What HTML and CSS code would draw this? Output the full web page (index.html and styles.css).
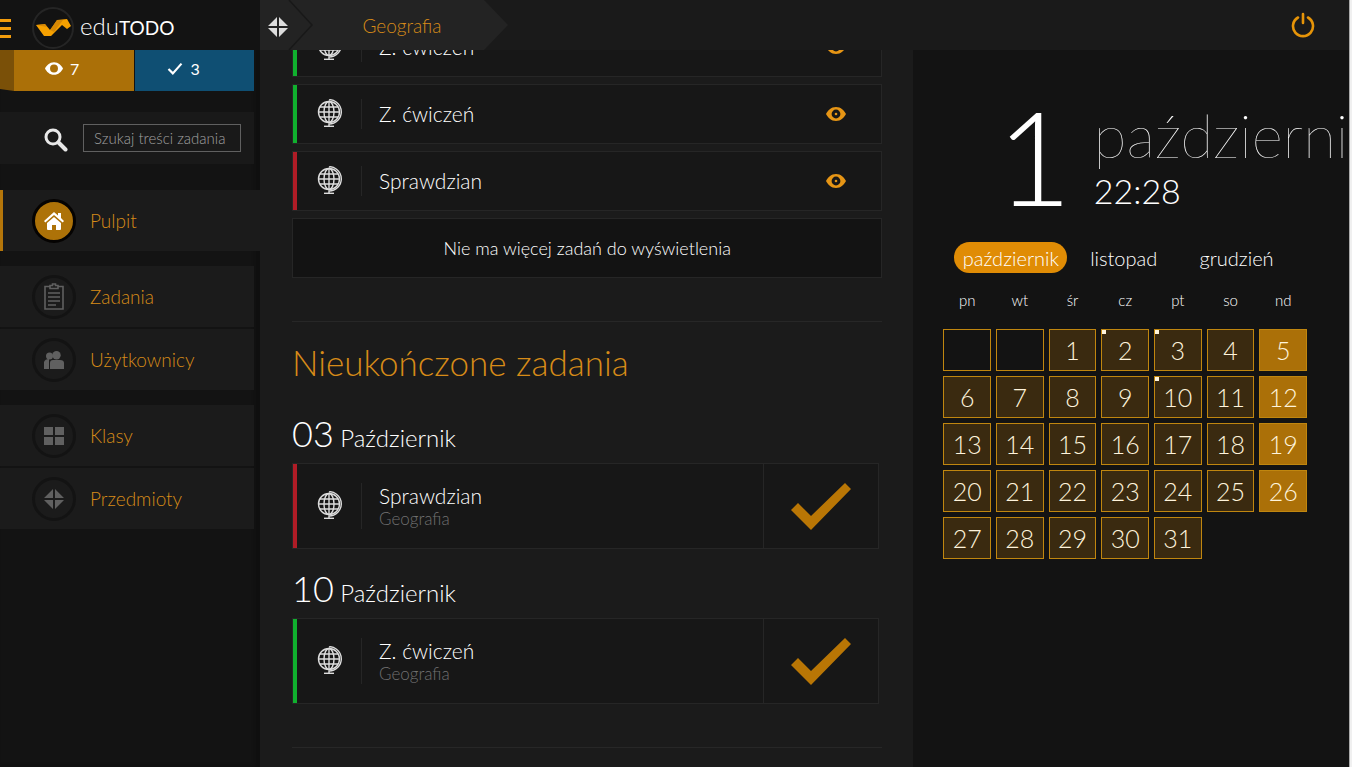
FILE: index.html
```html
<!DOCTYPE html>
<html lang="pl">
<head>
<meta charset="utf-8">
<title>eduTODO</title>
<link rel="stylesheet" href="styles.css">
</head>
<body>
<svg class="defs" aria-hidden="true">
  <symbol id="eye" viewBox="0 0 20 14"><path fill="currentColor" fill-rule="evenodd" d="M10 0C5 0 1.800 3.500 0 7c1.800 3.500 5 7 10 7s8.200-3.500 10-7C18.200 3.500 15 0 10 0zm0 2.600a4.400 4.400 0 1 1 0 8.800 4.400 4.400 0 0 1 0-8.800z"/><circle class="pupil" cx="10" cy="7" r="1.300"/></symbol>
  <symbol id="eye-open" viewBox="0 0 20 14"><path fill="currentColor" fill-rule="evenodd" d="M10 0C5 0 1.800 3.500 0 7c1.800 3.500 5 7 10 7s8.200-3.500 10-7C18.200 3.500 15 0 10 0zm0 2.600a4.400 4.400 0 1 1 0 8.800 4.400 4.400 0 0 1 0-8.800z"/></symbol>
  <symbol id="globe" viewBox="0 0 26 28"><g fill="none" stroke="currentColor" stroke-width="1.400"><circle cx="12" cy="13" r="10.500"/><ellipse cx="12" cy="13" rx="5" ry="10.500"/><path d="M12 2.500v21M1.500 13h21M3 8h18M3 18h18"/><path d="M12 1c4-1 12 3 12.300 11.500C24.500 19 19 25 12 25v2"/><path d="M7 27.300h10"/></g></symbol>
  <symbol id="arrows" viewBox="0 0 20 20"><path fill="currentColor" d="M9 0v9H0zM11 0v9h9zM9 20v-9H0zM11 20v-9h9z"/></symbol>
  <symbol id="tick" viewBox="0 0 60 47"><path fill="currentColor" d="M0 27l7-7 13 13L54 0l6 6-40 41z"/></symbol>
</svg>

<header class="topbar">
  <div class="brand">
    <button class="burger" aria-label="Menu"><span></span><span></span><span></span></button>
    <a class="logo" href="#">
      <svg class="logo-mark" viewBox="0 0 42 42"><circle cx="21" cy="21" r="20" fill="#121212" stroke="#252525" stroke-width="2"/><path fill="#f5a000" d="M4 18l9-1 5 6 7-10 10-1 4 7-4 3-5-4-11 11h-7z"/><path fill="#c97d06" d="M25 13l6 0-9 12-4-2zM4 18l9-1 2 3z" opacity=".7"/></svg>
      <span class="logo-text">edu<span class="logo-strong">TODO</span></span>
    </a>
  </div>
  <nav class="crumbs">
    <svg class="crumb-shape" viewBox="0 0 248 50" preserveAspectRatio="none"><path fill="#232323" d="M0 0h224l24 25-24 25H0z"/><path d="M29 0l23 25-23 25" fill="none" stroke="#181818" stroke-width="1.500"/></svg>
    <a class="crumb-home" href="#" aria-label="Przedmioty"><svg><use href="#arrows"/></svg></a>
    <a class="crumb-page" href="#">Geografia</a>
  </nav>
  <button class="power" aria-label="Wyloguj"><svg viewBox="0 0 24 26" fill="none" stroke="#e69408" stroke-width="2.600" stroke-linecap="round"><path d="M7 5.500a10 10 0 1 0 10 0M12 2v9"/></svg></button>
</header>

<div class="layout">
  <aside class="sidebar">
    <div class="stats">
      <span class="stat-fold"></span>
      <a class="stat stat-seen" href="#"><svg><use href="#eye-open"/></svg>7</a>
      <a class="stat stat-done" href="#"><svg viewBox="0 0 14 12"><path d="M1 6.500l4 4L13 1.500" fill="none" stroke="#fff" stroke-width="2"/></svg>3</a>
    </div>
    <form class="search">
      <label for="q" aria-label="Szukaj"><svg viewBox="0 0 24 24" fill="none" stroke="#e8e8e8"><circle cx="9" cy="9" r="7" stroke-width="3"/><path d="M14.500 14.500l7 7" stroke-width="4" stroke-linecap="round"/></svg></label>
      <input id="q" type="text" placeholder="Szukaj treści zadania">
    </form>
    <nav class="menu">
      <a class="item active" href="#"><span class="badge"><svg viewBox="0 0 20 18" fill="#fff"><path d="M10 0l4 3.500V1h3v5l3 3-1.300 1.400L10 3 1.300 10.400 0 9z"/><path d="M3 11l7-6 7 6v6a1 1 0 0 1-1 1h-4v-5H8v5H4a1 1 0 0 1-1-1z"/></svg></span>Pulpit</a>
      <div class="group">
        <a class="item" href="#"><span class="badge"><svg class="tall" viewBox="0 0 20 27" fill="none" stroke="currentColor" stroke-width="1.600"><path d="M6 3.500H1V26h18V3.500h-5M6 5.500v-3h2.500V1h3v1.500H14v3zM4 10h12M4 14h12M4 18h12M4 22h8"/></svg></span>Zadania</a>
        <a class="item" href="#"><span class="badge"><svg viewBox="0 0 20 18" fill="currentColor"><circle cx="5.500" cy="5" r="3.500"/><path d="M0 11q1-3 5-3v10H0z"/><circle cx="12.500" cy="4.200" r="4.200"/><path d="M6 18v-6q0-3 3-3h7q4 0 4 3v6z"/></svg></span>Użytkownicy</a>
      </div>
      <div class="group">
        <a class="item" href="#"><span class="badge"><svg viewBox="0 0 20 20" fill="currentColor"><path d="M0 1h9v8H0zM11 1h9v8h-9zM0 11h9v8H0zM11 11h9v8h-9z"/></svg></span>Klasy</a>
        <a class="item" href="#"><span class="badge"><svg><use href="#arrows"/></svg></span>Przedmioty</a>
      </div>
    </nav>
  </aside>

  <main class="content">
    <section class="tasks">
      <article class="task green"><svg class="globe"><use href="#globe"/></svg><span class="name">Z. ćwiczeń</span><button class="view" aria-label="Pokaż"><svg><use href="#eye"/></svg></button></article>
      <article class="task green"><svg class="globe"><use href="#globe"/></svg><span class="name">Z. ćwiczeń</span><button class="view" aria-label="Pokaż"><svg><use href="#eye"/></svg></button></article>
      <article class="task red"><svg class="globe"><use href="#globe"/></svg><span class="name">Sprawdzian</span><button class="view" aria-label="Pokaż"><svg><use href="#eye"/></svg></button></article>
      <p class="no-more">Nie ma więcej zadań do wyświetlenia</p>
    </section>
    <section class="unfinished">
      <h2>Nieukończone zadania</h2>
      <h3><span class="day">03</span> Październik</h3>
      <article class="card red"><svg class="globe"><use href="#globe"/></svg><div class="name">Sprawdzian<small>Geografia</small></div><button class="finish" aria-label="Ukończ"><svg><use href="#tick"/></svg></button></article>
      <h3><span class="day">10</span> Październik</h3>
      <article class="card green"><svg class="globe"><use href="#globe"/></svg><div class="name">Z. ćwiczeń<small>Geografia</small></div><button class="finish" aria-label="Ukończ"><svg><use href="#tick"/></svg></button></article>
    </section>
    <hr>
  </main>

  <aside class="calendar">
    <div class="today">
      <span class="today-day">1</span>
      <div class="today-info"><span class="today-month">październik</span><time>22:28</time></div>
    </div>
    <div class="months">
      <button class="month selected">październik</button>
      <button class="month">listopad</button>
      <button class="month">grudzień</button>
    </div>
    <table class="days">
      <thead><tr><th>pn</th><th>wt</th><th>śr</th><th>cz</th><th>pt</th><th>so</th><th>nd</th></tr></thead>
      <tbody>
        <tr><td class="blank"></td><td class="blank"></td><td>1</td><td class="marked">2</td><td class="marked">3</td><td>4</td><td class="sunday">5</td></tr>
        <tr><td>6</td><td>7</td><td>8</td><td>9</td><td class="marked">10</td><td>11</td><td class="sunday">12</td></tr>
        <tr><td>13</td><td>14</td><td>15</td><td>16</td><td>17</td><td>18</td><td class="sunday">19</td></tr>
        <tr><td>20</td><td>21</td><td>22</td><td>23</td><td>24</td><td>25</td><td class="sunday">26</td></tr>
        <tr><td>27</td><td>28</td><td>29</td><td>30</td><td>31</td></tr>
      </tbody>
    </table>
  </aside>
  <div class="scroll-edge"></div>
</div>
</body>
</html>
```
FILE: styles.css
```css
* { box-sizing: border-box; }
html, body { height: 100%; }
body {
  margin: 0;
  overflow: hidden;
  background: #131313;
  color: #fff;
  font-family: Lato, "Noto Sans", sans-serif;
  font-weight: 300;
}
a { color: inherit; text-decoration: none; }
button { padding: 0; border: 0; background: none; color: inherit; font: inherit; cursor: pointer; }
svg { display: block; }
.defs { display: none; }
.pupil { fill: currentColor; }

/* Top bar */
.topbar {
  position: fixed;
  inset: 0 3px auto 0;
  z-index: 2;
  display: flex;
  height: 50px;
  background: #1a1a1a;
}
.brand { display: flex; align-items: center; width: 260px; padding-top: 6px; background: #131313; }
.burger { display: flex; flex-direction: column; gap: 5px; width: 11px; margin-right: 21px; }
.burger span { height: 3px; background: #f39c0c; }
.logo { display: flex; align-items: center; gap: 6px; }
.logo-mark { width: 42px; height: 42px; }
.logo-text { padding-bottom: 3px; font-size: 24px; line-height: 30px; }
.logo-strong { font-size: 19px; font-weight: 400; }
.crumbs { position: relative; display: flex; align-items: center; width: 248px; }
.crumb-shape { position: absolute; inset: 0; width: 100%; height: 100%; }
.crumb-home { position: relative; width: 20px; margin: 4px 0 0 8px; color: #ddd; }
.crumb-home svg { width: 20px; height: 20px; }
.crumb-page { position: relative; flex: 1; padding-left: 8px; color: #d78b18; font-size: 19px; text-align: center; }
.power { margin: 0 34px 0 auto; }
.power svg { width: 24px; height: 26px; }

.layout { display: grid; grid-template-columns: 260px 3fr 2fr 3px; height: 100%; }
.scroll-edge { background: #f0f0f0; border-left: 1px solid #aaa; }

/* Sidebar */
.sidebar { padding-top: 50px; background: #131313; box-shadow: inset -4px 0 4px #0f0f0f; }
.stats { display: flex; height: 41px; margin-right: 6px; }
.stat-fold { width: 14px; background: #7a5008; clip-path: polygon(0 0, 100% 0, 100% 100%, 0 95%); }
.stat { display: flex; flex: 1; align-items: center; padding: 0 0 5px 31px; background: #ab7008; font-size: 16px; font-weight: 400; gap: 7px; }
.stat svg { width: 18px; height: 13px; }
.stat-done { border-left: 1px solid #131313; background: #0f4f73; }
.search { display: flex; align-items: center; gap: 15px; height: 52px; margin: 21px 6px 26px 0; padding-left: 44px; background: #191919; }
.search svg { width: 24px; height: 24px; margin-top: 4px; }
.search input {
  width: 158px; height: 28px; padding: 0 10px; border: 1px solid #606060; background: transparent; color: #ddd;
  font: 300 15px Lato, sans-serif;
}
.search input::placeholder { color: #a0a0a0; }
.item {
  display: flex; align-items: center; gap: 14px; height: 61px; margin-right: 6px; padding-left: 32px;
  background: #1b1b1b; color: #d78b18; font-size: 19px;
}
.item.active { margin-right: 0; padding-left: 29px; border-left: 3px solid #b5760a; }
.group { display: grid; gap: 2px; margin-top: 15px; }
.badge { display: grid; place-items: center; width: 44px; height: 44px; border: 3px solid #131313; border-radius: 50%; color: #606060; }
.active .badge { border-color: #050302; background: #ad7208; }
.badge svg { width: 20px; height: 20px; }
.badge .tall { height: 27px; }

/* Task lists */
.content { padding: 17px 31px 0 32px; background: #1b1b1b; }
.tasks { display: grid; gap: 7px; }
.task, .card { display: flex; align-items: center; border: 1px solid #262626; background: #171717; font-size: 21px; }
.task { height: 60px; padding-right: 35px; }
.green { box-shadow: inset 4px 0 #10b02e; }
.red { box-shadow: inset 4px 0 #b01c26; }
.globe { width: 26px; height: 28px; margin: 0 18px 0 24px; color: #ddd; }
.name { display: flex; flex: 1; flex-direction: column; justify-content: center; min-height: 30px; padding-left: 17px; border-left: 1px solid #262626; line-height: 26px; }
.task .globe { margin-bottom: 3px; }
.name small { color: #707070; font-size: 17px; line-height: 19px; }
.view { color: #e69515; }
.view svg { width: 20px; height: 14px; }
.no-more { display: grid; place-items: center; height: 60px; margin: 0; border: 1px solid #262626; background: #131313; font-size: 18px; }
.unfinished { margin-top: 43px; padding-top: 16px; border-top: 1px solid #272727; }
h2 { margin: 0 0 27px; color: #d78b18; font-size: 35px; font-weight: 300; line-height: 48px; }
h3 { margin: 0 0 5px; font-size: 24px; font-weight: 300; line-height: 40px; }
.day { font-size: 36px; }
.card { height: 86px; margin: 0 3px 19px 0; }
.card .name { padding-bottom: 1px; }
.card .globe { margin-bottom: 2px; }
.finish { display: grid; place-items: center; align-self: stretch; width: 115px; border-left: 1px solid #262626; color: #b97605; }
.finish svg { width: 60px; height: 47px; }
hr { height: 1px; margin: 43px 0 0; border: 0; background: #272727; }

/* Calendar */
.calendar { min-width: 0; padding: 101px 37px 0 25px; overflow: hidden; background: #131313; }
.today { display: flex; padding-left: 58px; gap: 22px; }
.today-day { font-size: 130px; line-height: 110px; }
.today-info { display: flex; flex-direction: column; }
.today-month { font-size: 60px; font-weight: 100; line-height: 68px; }
.today-info time { font-size: 34px; line-height: 44px; }
.months { display: grid; grid-template-columns: repeat(3, 1fr); margin: 29px 19px 0 16px; }
.month { height: 31px; border-radius: 16px; font-size: 20px; }
.selected { background: #e08c05; }
.days { width: 100%; margin-top: 10px; border-spacing: 5px; table-layout: fixed; }
.days th { height: 36px; padding: 0 0 12px; font-size: 15px; font-weight: 300; }
.days td { position: relative; height: 42px; padding: 0; font-size: 25px; line-height: 40px; text-align: center; }
.days td { border: 1px solid #c0860f; background: #3a2a10; color: #fff4dc; }
.days .blank { background: transparent; }
.days .sunday { background: #ab7008; }
.marked::before { content: ""; position: absolute; top: 0; left: 0; width: 4px; height: 4px; background: #fff4dc; }
```
